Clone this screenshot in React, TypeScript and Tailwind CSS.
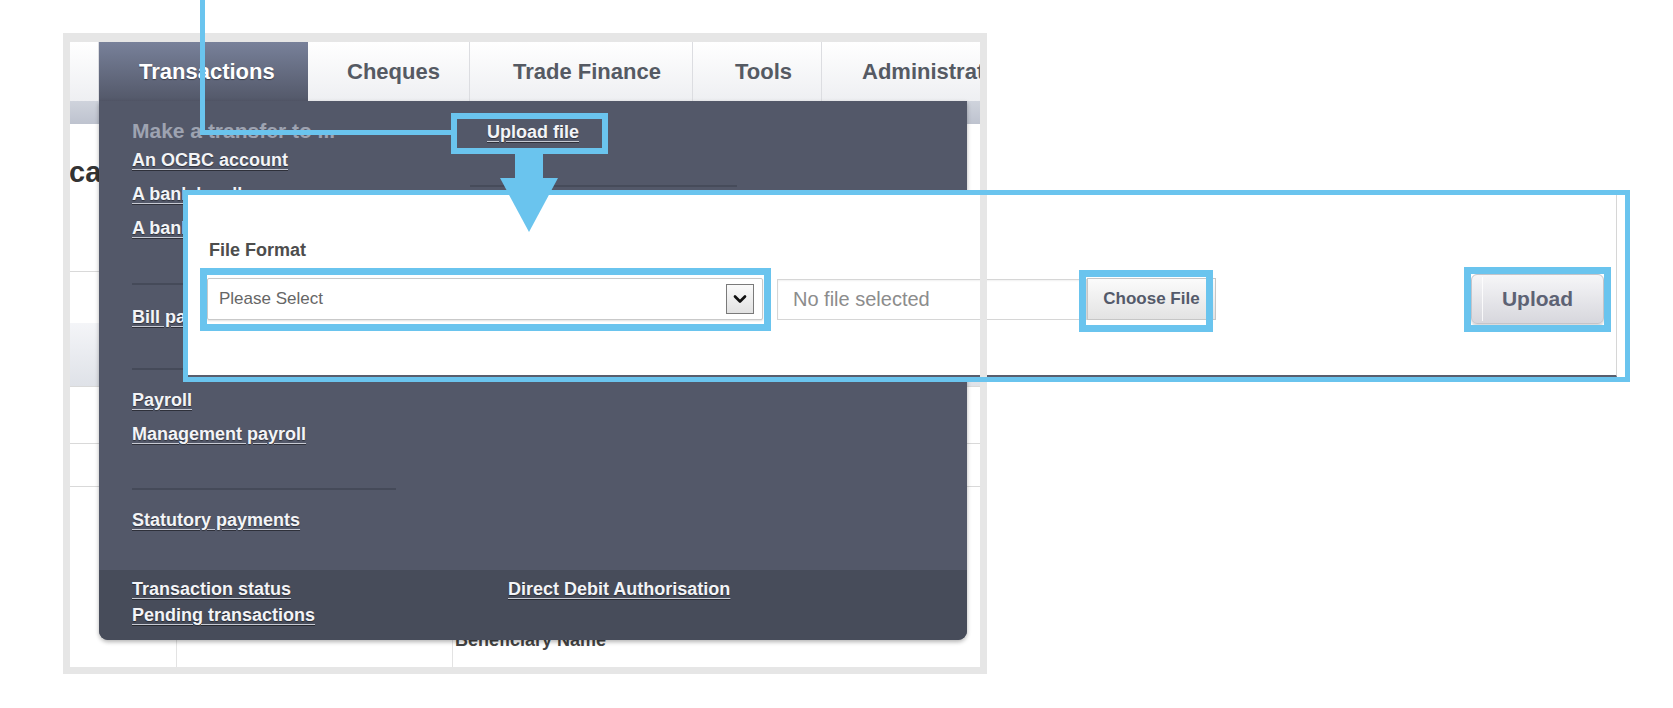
import type { ReactNode } from "react";
import { ChevronDown } from "lucide-react";

function MenuLink({ children }: { children: ReactNode }) {
  return (
    <div className="h-[34px] leading-[34px] whitespace-nowrap">
      <span className="text-[18px] font-bold text-[#f3f4f7] underline decoration-[#c7cad3] underline-offset-[3px] [text-shadow:0_1px_1px_rgba(0,0,0,0.45)]">
        {children}
      </span>
    </div>
  );
}

function Sep() {
  return <div className="h-[2px] w-[264px] bg-[#454a59]" />;
}

const tabs = [
  { label: "Cheques", cls: "w-[162px] pl-[39px]" },
  { label: "Trade Finance", cls: "w-[223px] pl-[43px]" },
  { label: "Tools", cls: "w-[129px] pl-[42px]" },
  { label: "Administration", cls: "w-[200px] pl-[40px]" },
];

export default function App() {
  return (
    <div className="relative h-[708px] w-[1673px] overflow-hidden bg-white [font-family:'Liberation_Sans',Arial,sans-serif]">
      {/* screenshot frame */}
      <div className="ml-[63px] mt-[33px] h-[641px] w-[924px] border-x-[7px] border-t-[9px] border-b-[7px] border-[#e6e6e6]">
        <div className="relative h-full w-full overflow-hidden">
          {/* tab row */}
          <div className="flex h-[59px] whitespace-nowrap text-[22px] font-bold">
            <div className="w-[29px] shrink-0 border-r border-[#dcdde1] bg-gradient-to-b from-white to-[#eeeff2]" />
            <div className="flex w-[209px] shrink-0 items-center bg-gradient-to-b from-[#78819a] to-[#535869] pl-[40px] text-white [text-shadow:0_1px_1px_rgba(0,0,0,0.4)]">
              Transactions
            </div>
            {tabs.map((t) => (
              <div
                key={t.label}
                className={`flex shrink-0 items-center border-r border-[#dcdde1] bg-gradient-to-b from-white to-[#eeeff2] text-[#555a63] ${t.cls}`}
              >
                {t.label}
              </div>
            ))}
          </div>
          <div className="h-[23px] bg-gradient-to-b from-[#cfd3dc] to-[#bec3cf]" />

          {/* page body behind the menu */}
          <div className="h-[148px] border-b border-[#d9d9d9] pt-[31px]">
            <div className="-ml-[1px] text-[29px] font-bold leading-[34px] text-[#333]">cal transfer</div>
          </div>
          <div className="h-[51px]" />
          <div className="h-[64px] border-b border-[#d9d9d9] bg-gradient-to-b from-[#f4f5f8] to-[#dfe2e8]" />
          <div className="h-[57px] border-b border-[#d9d9d9]" />
          <div className="h-[43px] border-b border-[#d9d9d9]" />
          <div className="flex pt-[142px]">
            <div className="ml-[106px] h-[40px] w-[277px] border-x border-[#e3e3e3]" />
            <div className="ml-[2px] text-[18px] font-bold leading-[22px] text-[#444]">Beneficiary Name</div>
          </div>

          {/* Transactions dropdown */}
          <div className="absolute left-[29px] top-[59px] flex h-[539px] w-[868px] flex-col overflow-hidden rounded-b-[9px] bg-[#535869] shadow-[0_2px_4px_rgba(0,0,0,0.3)]">
            <div className="flex flex-1">
              <div className="w-[354px] pl-[33px]">
                <div className="mt-[18px] h-[24px] whitespace-nowrap text-[21px] font-bold leading-[24px] text-[#9ea3b1]">
                  Make a transfer to ...
                </div>
                <MenuLink>An OCBC account</MenuLink>
                <MenuLink>A bank locally</MenuLink>
                <MenuLink>A bank overseas</MenuLink>
                <div className="mt-[38px]">
                  <Sep />
                </div>
                <div className="pt-[15px]">
                  <MenuLink>Bill payments</MenuLink>
                </div>
                <div className="mt-[34px]">
                  <Sep />
                </div>
                <div className="pt-[13px]">
                  <MenuLink>Payroll</MenuLink>
                  <MenuLink>Management payroll</MenuLink>
                </div>
                <div className="mt-[37px]">
                  <Sep />
                </div>
                <div className="pt-[13px]">
                  <MenuLink>Statutory payments</MenuLink>
                </div>
              </div>
              <div className="flex-1 pl-[17px]">
                <div className="pl-[17px] pt-[14px]">
                  <MenuLink>Upload file</MenuLink>
                </div>
                <div className="mt-[36px] h-[2px] w-[267px] bg-[#464b5a]" />
              </div>
            </div>
            <div className="flex h-[70px] bg-[#474c5a] pt-[6px]">
              <div className="w-[409px] pl-[33px] [&>div]:h-[26px] [&>div]:leading-[26px]">
                <MenuLink>Transaction status</MenuLink>
                <MenuLink>Pending transactions</MenuLink>
              </div>
              <div className="[&>div]:h-[26px] [&>div]:leading-[26px]">
                <MenuLink>Direct Debit Authorisation</MenuLink>
              </div>
            </div>
          </div>
        </div>
      </div>

      {/* annotation: connector from top */}
      <div className="absolute left-[200px] top-0 h-[135px] w-[5px] bg-[#6ac4ee]" />
      <div className="absolute left-[200px] top-[130px] h-[5px] w-[252px] bg-[#6ac4ee]" />
      <div className="absolute left-[451px] top-[113px] h-[41px] w-[157px] border-[6px] border-[#6ac4ee]" />

      {/* annotation: enlarged upload form */}
      <div className="absolute left-[183px] top-[190px] h-[192px] w-[1447px] border-[5px] border-[#6ac4ee] bg-white">
        <div className="h-full w-[1429px] border-r border-b-2 border-r-[#d6d6d6] border-b-[#595e6d]">
          <div className="pl-[21px] pt-[44px] text-[18px] font-bold leading-[22px] text-[#4d4d4d]">File Format</div>
          <div className="mt-[13px] flex items-center pl-[19px] pr-[12px]">
            <div className="flex h-[42px] w-[556px] items-center justify-between rounded-[2px] border border-[#c9c9c9] bg-white pl-[11px] pr-[8px] shadow-[0_1px_2px_rgba(0,0,0,0.12)]">
              <span className="text-[17px] text-[#666]">Please Select</span>
              <span className="flex h-[30px] w-[28px] items-center justify-center border border-[#7a7a7a] bg-gradient-to-b from-[#fafafa] to-[#e2e2e2]">
                <ChevronDown size={20} strokeWidth={3.2} color="#111" />
              </span>
            </div>
            <div className="ml-[14px] flex h-[41px] w-[310px] items-center border border-[#d6d6d6] bg-white pl-[15px] shadow-[inset_0_1px_2px_rgba(0,0,0,0.06)]">
              <span className="text-[20px] text-[#8c8c8c]">No file selected</span>
            </div>
            <div className="flex h-[42px] w-[129px] items-center justify-center border border-[#c6c6c6] bg-gradient-to-b from-[#fbfbfb] to-[#e3e3e3] text-[17px] font-bold text-[#545a6a]">
              Choose File
            </div>
            <div className="relative ml-auto flex h-[50px] w-[133px] items-center justify-center rounded-[6px] border border-[#c4c4ca] bg-gradient-to-b from-[#f6f6f8] to-[#d7d7dd] text-[21px] font-bold text-[#5d6274] shadow-[0_2px_2px_rgba(0,0,0,0.15)]">
              <span className="absolute bottom-[2px] left-[10px] top-[2px] w-px bg-white/80" />
              Upload
            </div>
          </div>
        </div>
        {/* frame edge showing through */}
        <div className="absolute bottom-0 left-[792px] top-0 w-[7px] bg-[#e6e6e6]" />
        {/* highlight boxes */}
        <div className="absolute left-[12px] top-[73px] h-[63px] w-[571px] border-[7px] border-[#6ac4ee]" />
        <div className="absolute left-[891px] top-[75px] h-[62px] w-[134px] border-[7px] border-[#6ac4ee]" />
        <div className="absolute left-[1276px] top-[72px] h-[65px] w-[147px] border-[7px] border-[#6ac4ee]" />
      </div>

      {/* annotation arrow */}
      <div className="absolute left-[515px] top-[154px] h-[26px] w-[28px] bg-[#6ac4ee]" />
      <svg className="absolute left-[500px] top-[178px]" width="58" height="54" viewBox="0 0 58 54">
        <polygon points="0,0 58,0 29,54" fill="#6ac4ee" />
      </svg>
    </div>
  );
}
